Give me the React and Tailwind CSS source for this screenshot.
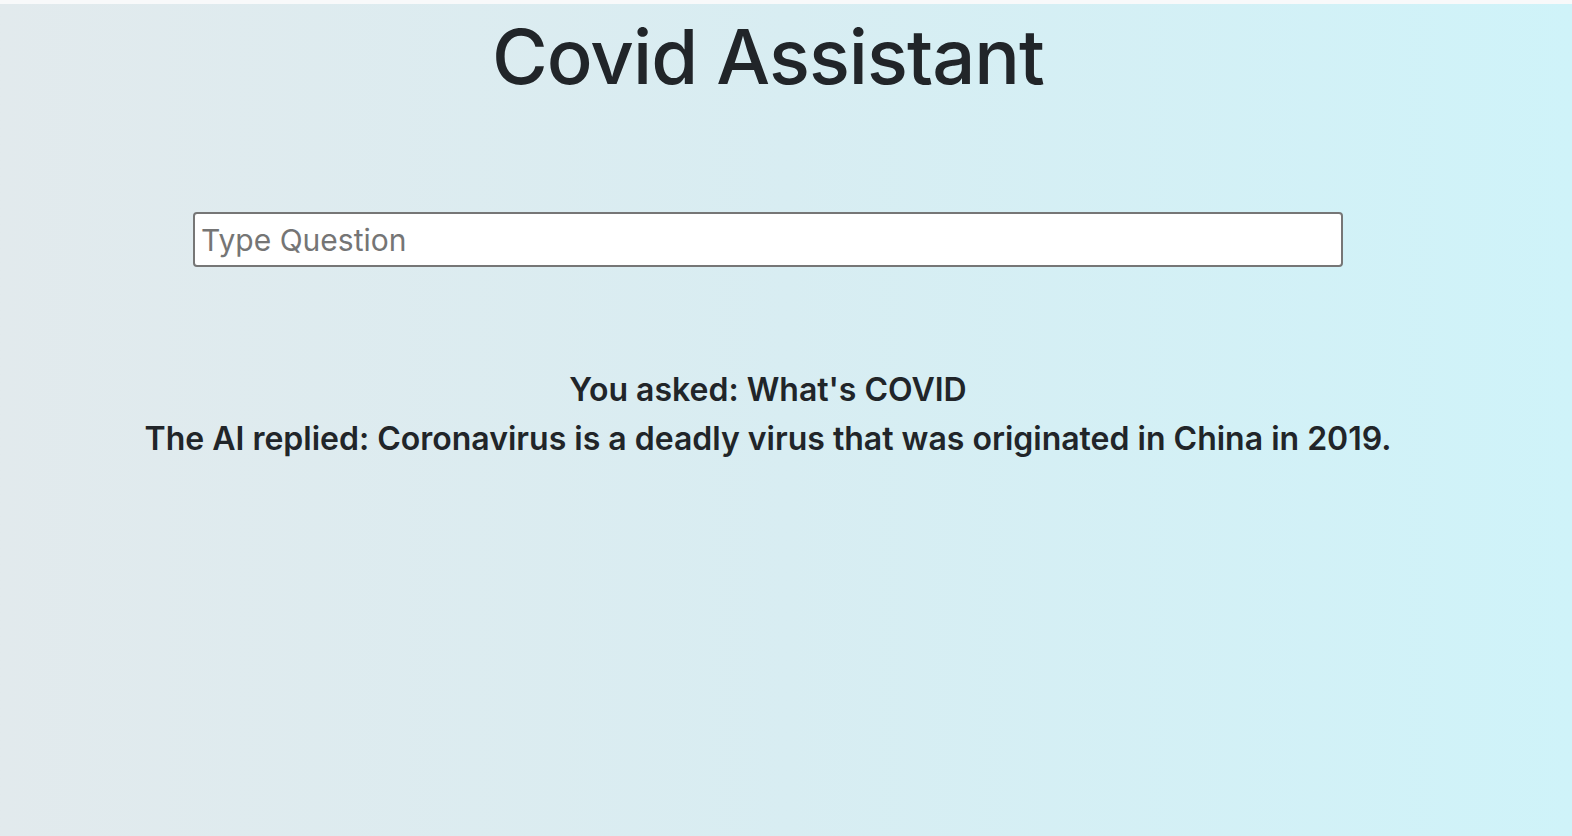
export default function App() {
  return (
    <div
      className="min-h-[836px] w-full bg-[#f8f9fa] pt-[4px] text-[#212529]"
      style={{ fontFamily: "Inter, 'Noto Sans', sans-serif" }}
    >
      <div className="min-h-[832px] bg-gradient-to-r from-[#e2eaed] via-[#d8edf2] to-[#cff3f9]">
        <div className="flex w-[1536px] flex-col items-center">
          {/* Title */}
          <h1 className="mt-[2px] text-[76px] font-medium leading-[100px] tracking-[-1px]">
            Covid Assistant
          </h1>

          {/* Question input */}
          <input
            type="text"
            placeholder="Type Question"
            className="mt-[106px] h-[55px] w-[1150px] rounded-[4px] border-2 border-[#767676] bg-white px-[6px] text-[30px] placeholder:text-[#757575] focus:outline-none"
          />

          {/* Answer */}
          <div className="mt-[98px] flex flex-col items-center text-[32px] font-semibold leading-[49px]">
            <p>You asked: What's COVID</p>
            <p>The AI replied: Coronavirus is a deadly virus that was originated in China in 2019.</p>
          </div>
        </div>
      </div>
    </div>
  );
}
